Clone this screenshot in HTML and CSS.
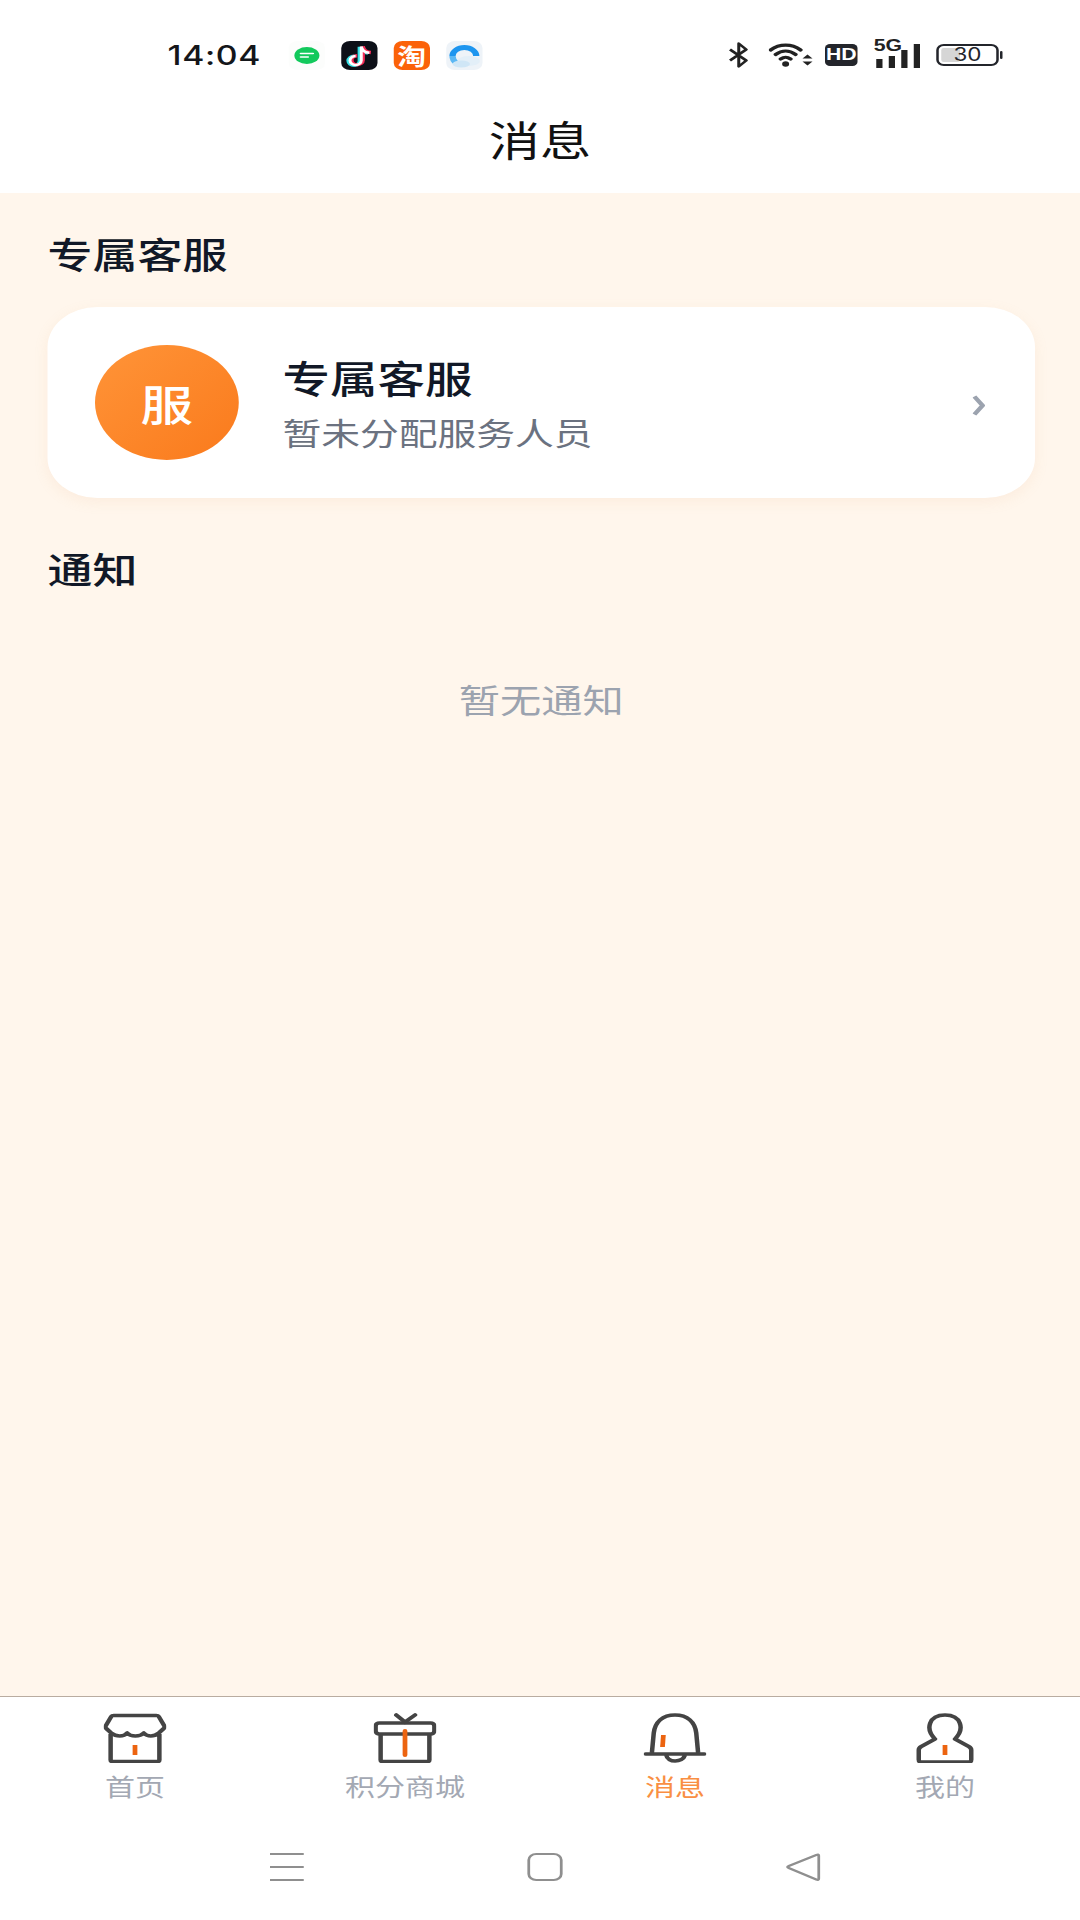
FILE: index.html
```html
<!doctype html>
<html lang="zh-CN">
  <head>
    <meta charset="UTF-8" />
    <meta name="viewport" content="width=device-width, initial-scale=1.0" />
    <title>消息</title>
    <link rel="stylesheet" href="styles.css">
  </head>

  <body>
    <div class="app">
      <div class="status-bar">
        <div class="status-left">
          <span class="clock">14:04</span>
          <div class="app-icons">
            <span class="app-icon app-msg">
              <svg viewBox="0 0 29 29" width="29" height="29">
                <ellipse cx="14.5" cy="14.5" rx="10" ry="8.5" fill="#12c95c" />
                <path d="M9.5 12.5h10M9.5 16h6" stroke="#fff" stroke-width="1.6" stroke-linecap="round" />
              </svg>
            </span>
            <span class="app-icon app-tiktok">
              <svg viewBox="0 0 29 29" width="29" height="29">
                <path d="M16 5v14a4.500 4.500 0 1 1-4.500-4.500M16 5c.5 3.500 3 6 6.500 6.300" fill="none" stroke="#35e0e6" stroke-width="3.400" transform="translate(-1.200 .8)" />
                <path d="M16 5v14a4.500 4.500 0 1 1-4.500-4.500M16 5c.5 3.500 3 6 6.500 6.300" fill="none" stroke="#f52c58" stroke-width="3.400" transform="translate(1.200 .2)" />
                <path d="M16 5v14a4.500 4.500 0 1 1-4.500-4.500M16 5c.5 3.500 3 6 6.500 6.300" fill="none" stroke="#fff" stroke-width="2.400" transform="translate(0 .5)" />
              </svg>
            </span>
            <span class="app-icon app-taobao">淘</span>
            <span class="app-icon app-cloud">
              <svg viewBox="0 0 29 29" width="29" height="29">
                <path d="M5 15a9.500 8.500 0 0 1 19 0" fill="none" stroke="#1d95ef" stroke-width="5" />
                <path d="M5 15c0 3 1 5 3 7" fill="none" stroke="#5cb8f4" stroke-width="5" />
                <ellipse cx="18" cy="20" rx="9" ry="5" fill="#e3eff8" />
                <ellipse cx="12" cy="23" rx="7" ry="3.500" fill="#cfe6f6" />
              </svg>
            </span>
          </div>
        </div>
        <div class="status-right">
          <svg class="bt-icon" viewBox="0 0 16 26" width="16" height="26">
            <path d="M1 7.500l13 11-6 6V1.500l6 6-13 11" fill="none" stroke="#222" stroke-width="2.400" stroke-linejoin="round" />
          </svg>
          <svg viewBox="0 0 36 26" width="36" height="26">
            <path d="M1.500 8c7-6.500 17-6.500 24 0M5.500 12.500c5-4.500 11-4.500 16 0M9.500 17c3-2.500 5-2.500 8 0" fill="none" stroke="#222" stroke-width="3.200" stroke-linecap="round" />
            <circle cx="13.500" cy="22" r="2.800" fill="#222" />
            <path d="M27 16.500l4-4 4 4zM27 19.500h8l-4 4z" fill="#222" />
          </svg>
          <span class="hd-badge">HD</span>
          <div class="signal">
            <span class="signal-label">5G</span>
            <svg viewBox="0 0 39 26" width="39" height="26">
              <path d="M2 17h5v9H2zM12 14h5v12h-5z" fill="#222" />
              <path d="M22 8h5v18h-5zM32 2h5v24h-5z" fill="#222" />
            </svg>
          </div>
          <div class="battery">
            <div class="battery-body">
              <span class="battery-fill"></span>
              <span class="battery-text">30</span>
            </div>
            <span class="battery-tip"></span>
          </div>
        </div>
      </div>

      <header class="top-bar">消息</header>

      <main class="content">
        <h2 class="section-title">专属客服</h2>
        <div class="service-card">
          <div class="avatar">服</div>
          <div class="service-info">
            <div class="service-name">专属客服</div>
            <div class="service-note">暂未分配服务人员</div>
          </div>
          <svg class="chevron" viewBox="0 0 10 21" width="10" height="21">
            <path d="M1.500 1.500L8 10.500l-6.500 9" fill="none" stroke="#9ca3af" stroke-width="3.800" />
          </svg>
        </div>

        <h2 class="section-title notice-title">通知</h2>
        <div class="empty-note">暂无通知</div>
      </main>

      <nav class="tab-bar">
        <div class="tab">
          <svg viewBox="0 0 50 50" width="50" height="50">
            <path d="M8 2.500h34q1.500 0 2 1l4.500 9.500q.5 1.500-.5 2.500L44 20c-4 4-9 4-12 0-3 4-10.500 4-13.300 0-2.700 4-8.700 4-12.700 0l-4-4.500q-1-1-.5-2.500L6 3.500q.5-1 2-1zM5.500 21v26q0 1.500 1.500 1.500h36q1.500 0 1.500-1.500V21" fill="none" stroke="#444" stroke-width="3.600" stroke-linejoin="round" />
            <path d="M25 32v10" stroke="#ec6410" stroke-width="3.800" />
          </svg>
          <span class="tab-label">首页</span>
        </div>
        <div class="tab">
          <svg viewBox="0 0 50 50" width="50" height="50">
            <path d="M18 2l7 7 8-7" fill="none" stroke="#444" stroke-width="3.600" stroke-linecap="round" />
            <rect x="1.500" y="10" width="47" height="11" rx="3" fill="none" stroke="#444" stroke-width="3.600" />
            <path d="M5.500 21v26q0 1.500 1.500 1.500h36q1.500 0 1.500-1.500V21" fill="none" stroke="#444" stroke-width="3.600" />
            <path d="M25 18v24" stroke="#ec6410" stroke-width="3.800" stroke-linecap="round" />
          </svg>
          <span class="tab-label">积分商城</span>
        </div>
        <div class="tab tab-active">
          <svg viewBox="0 0 50 50" width="50" height="50">
            <path d="M6.500 40l1.500-20C9 9 15 2 25 2s16 7 17 18l1.500 20" fill="none" stroke="#444" stroke-width="3.600" />
            <path d="M1.500 41h47" stroke="#444" stroke-width="3.600" stroke-linecap="round" />
            <path d="M18 42c1 8 13 8 15 0" fill="none" stroke="#444" stroke-width="3.600" />
            <path d="M15.700 22l-.7 12" stroke="#ec6410" stroke-width="3.800" />
          </svg>
          <span class="tab-label">消息</span>
        </div>
        <div class="tab">
          <svg viewBox="0 0 50 50" width="50" height="50">
            <path d="M17 26C9 16 12 2 25 2s16 14 8 24l11 7.500q2 1.500 2 3.500v9.500q0 2.500-2 2.500H6q-2 0-2-2.500V37q0-2 2-3.500z" fill="none" stroke="#444" stroke-width="3.600" stroke-linejoin="round" />
            <path d="M25 32v10" stroke="#ec6410" stroke-width="3.800" />
          </svg>
          <span class="tab-label">我的</span>
        </div>
      </nav>

      <div class="system-nav">
        <svg viewBox="0 0 30 30" width="30" height="30">
          <path d="M2 2h27M2 15h27M2 28h27" stroke="#8f8f8f" stroke-width="2.200" />
        </svg>
        <svg viewBox="0 0 30 30" width="30" height="30">
          <rect x="2" y="2" width="26" height="26" rx="6" fill="none" stroke="#8f8f8f" stroke-width="2.200" />
        </svg>
        <svg viewBox="0 0 30 30" width="30" height="30">
          <path d="M27 3.500v23q0 2-2 1L3 16q-2-1 0-2l22-11q2-1 2 .5z" fill="none" stroke="#8f8f8f" stroke-width="2.200" stroke-linejoin="round" />
        </svg>
      </div>
    </div>
  </body>
</html>
```

FILE: styles.css
```css
/* The whole screen is stretched sideways, so it is laid out at 864px and scaled to 1080px */
body {
  margin: 0;
  padding: 0;
  background: #ffffff;
  color: #111827;
  font-family: 'Noto Sans CJK SC', 'Noto Sans', sans-serif;
  overflow: hidden;
}

.app {
  width: 864px;
  height: 1920px;
  display: flex;
  flex-direction: column;
  transform: scaleX(1.25);
  transform-origin: left top;
}

/* Status bar */
.status-bar {
  height: 86px;
  flex-shrink: 0;
  padding: 24px 62px 0 134px;
  box-sizing: border-box;
  display: flex;
  justify-content: space-between;
  align-items: center;
}

.status-left {
  display: flex;
  align-items: center;
  gap: 22px;
}

.clock {
  font-family: 'Inter', sans-serif;
  font-size: 27px;
  font-weight: 500;
  letter-spacing: 0.5px;
  color: #14161a;
}

.app-icons {
  display: flex;
  gap: 13px;
}

.app-icon {
  width: 29px;
  height: 29px;
  display: flex;
  align-items: center;
  justify-content: center;
  border-radius: 7px;
}

.app-msg {
  background: #fcfdfc;
}

.app-tiktok {
  background: #0d1018;
}

.app-taobao {
  background: #fb6209;
  color: #ffffff;
  font-size: 23px;
  font-weight: 700;
  line-height: 1;
}

.app-cloud {
  background: #eef3f8;
}

.status-right {
  display: flex;
  align-items: center;
  gap: 11px;
}

.bt-icon {
  margin-right: 5px;
}

.hd-badge {
  width: 26px;
  height: 22px;
  margin: 0 2px 0 -2px;
  background: #23252b;
  border-radius: 4px;
  color: #ffffff;
  font-family: 'Liberation Sans', sans-serif;
  font-size: 17px;
  font-weight: 700;
  line-height: 22px;
  text-align: center;
}

.signal {
  position: relative;
}

.signal svg {
  display: block;
}

.signal-label {
  position: absolute;
  left: 0;
  top: -5px;
  font-family: 'Liberation Sans', sans-serif;
  font-size: 17px;
  font-weight: 700;
  line-height: 17px;
  color: #222222;
}

.battery {
  display: flex;
  align-items: center;
  gap: 1px;
}

.battery-body {
  position: relative;
  width: 50px;
  height: 22px;
  box-sizing: border-box;
  border: 2px solid #23252b;
  border-radius: 6px;
}

.battery-fill {
  position: absolute;
  left: 2px;
  top: 2px;
  bottom: 2px;
  width: 15px;
  border-radius: 2px;
  background: #d6d6d6;
}

.battery-text {
  position: absolute;
  left: 0;
  right: 0;
  top: 0;
  font-family: 'Inter', sans-serif;
  font-size: 18px;
  line-height: 18px;
  text-align: center;
  color: #23252b;
}

.battery-tip {
  width: 2px;
  height: 8px;
  background: #23252b;
  border-radius: 1px;
}

/* Header */
.top-bar {
  height: 107px;
  flex-shrink: 0;
  padding-bottom: 4px;
  box-sizing: border-box;
  display: flex;
  justify-content: center;
  align-items: center;
  font-size: 41px;
  color: #111111;
}

/* Main */
.content {
  flex: 1;
  background: #fff6ec;
  padding: 33px 36px 0 38px;
}

.section-title {
  margin: 0;
  font-size: 36px;
  font-weight: 500;
  line-height: 54px;
  color: #111827;
}

.notice-title {
  margin-top: 43px;
}

.service-card {
  margin-top: 27px;
  height: 191px;
  padding: 0 40px 0 38px;
  background: #ffffff;
  border-radius: 40px;
  box-shadow: 0 4px 12px rgba(234, 170, 120, 0.12);
  display: flex;
  align-items: center;
}

.avatar {
  width: 115px;
  height: 115px;
  flex-shrink: 0;
  border-radius: 50%;
  background: linear-gradient(135deg, #ff9438, #fa7a1c);
  color: #ffffff;
  font-size: 42px;
  font-weight: 500;
  line-height: 115px;
  text-align: center;
}

.service-info {
  flex: 1;
  margin-left: 35px;
}

.service-name {
  margin-bottom: 6px;
  font-size: 38px;
  font-weight: 500;
  line-height: 52px;
  color: #111827;
}

.service-note {
  font-size: 31px;
  line-height: 46px;
  color: #6b7280;
}

.chevron {
  margin-top: 6px;
}

.empty-note {
  margin-top: 80px;
  font-size: 33px;
  line-height: 48px;
  text-align: center;
  color: #9ca3af;
}

/* Bottom tabs */
.tab-bar {
  height: 124px;
  flex-shrink: 0;
  border-top: 1px solid #b9aca0;
  padding-top: 16px;
  box-sizing: border-box;
  display: grid;
  grid-template-columns: repeat(4, 1fr);
  background: #ffffff;
}

.tab {
  display: flex;
  flex-direction: column;
  align-items: center;
  gap: 6px;
}

.tab-label {
  font-size: 24px;
  line-height: 34px;
  color: #a3a8b3;
}

.tab-active .tab-label {
  color: #f98f43;
}

/* System navigation */
.system-nav {
  height: 100px;
  flex-shrink: 0;
  padding: 32px 0 0 8px;
  box-sizing: border-box;
  display: flex;
  justify-content: center;
  align-items: flex-start;
  gap: 177px;
}
```
